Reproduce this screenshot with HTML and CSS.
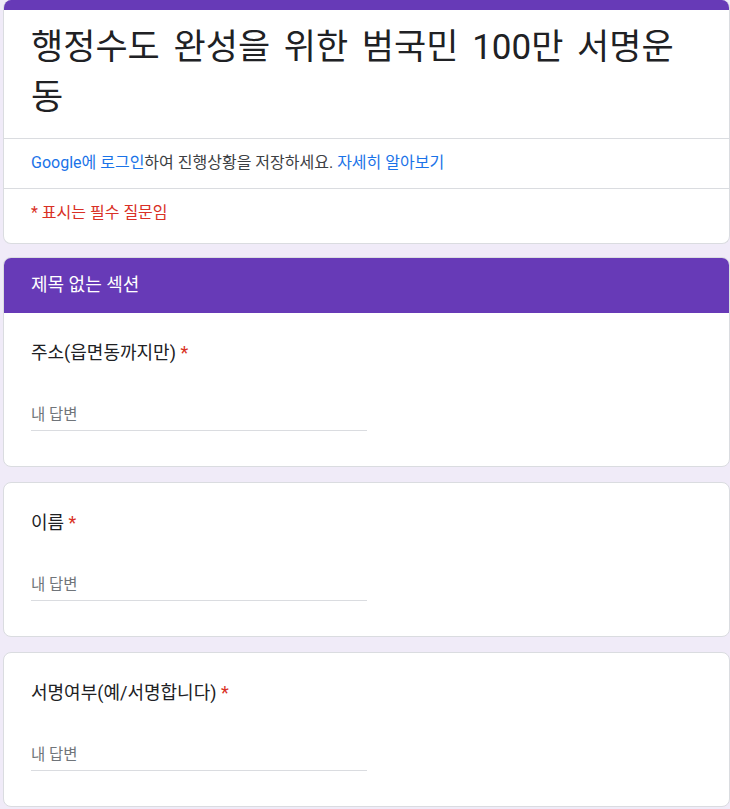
FILE: index.html
```html
<!DOCTYPE html>
<html lang="ko">
<head>
<meta charset="utf-8">
<title>행정수도 완성을 위한 범국민 100만 서명운동</title>
<link rel="stylesheet" href="styles.css">
</head>
<body>
<main class="page">
  <section class="card head-card">
    <div class="accent"></div>
    <h1 class="title">행정수도 완성을 위한 범국민 100만 서명운동</h1>
    <div class="row signin">
      <a class="link" href="#">Google에 로그인</a>하여 진행상황을 저장하세요. <a class="link" href="#">자세히 알아보기</a>
    </div>
    <div class="row required-note">* 표시는 필수 질문임</div>
  </section>

  <section class="card section-card">
    <div class="section-header">제목 없는 섹션</div>
    <div class="question">
      <div class="q-label">주소(읍면동까지만) <span class="star">*</span></div>
      <div class="answer">내 답변</div>
    </div>
  </section>

  <section class="card">
    <div class="question">
      <div class="q-label">이름 <span class="star">*</span></div>
      <div class="answer">내 답변</div>
    </div>
  </section>

  <section class="card">
    <div class="question">
      <div class="q-label">서명여부(예/서명합니다) <span class="star">*</span></div>
      <div class="answer">내 답변</div>
    </div>
  </section>
</main>
</body>
</html>
```

FILE: styles.css
```css
* { box-sizing: border-box; }

html, body {
  margin: 0;
  padding: 0;
  background: #f0ebf8;
}

body {
  font-family: Roboto, "Noto Sans CJK KR", sans-serif;
  color: #202124;
}

.page {
  display: flex;
  flex-direction: column;
  padding: 0 0 20px 3px;
  width: 730px;
}

.card {
  background: #ffffff;
  border: 1px solid #dadce0;
  border-radius: 8px;
  overflow: hidden;
  width: 727px;
  margin-top: 15px;
}

.head-card {
  border-top: none;
  margin-top: 0;
}

.section-card {
  margin-top: 13px;
}

.accent {
  height: 10px;
  background: #673ab7;
}

.title {
  margin: 0;
  padding: 13px 28px 15px 27px;
  font-size: 35px;
  font-weight: 400;
  line-height: 50px;
  word-spacing: 5px;
  color: #202124;
}

.row {
  border-top: 1px solid #dadce0;
  padding: 12px 27px 13px;
  font-size: 16px;
  line-height: 24px;
}

.signin {
  color: #3c4043;
}

.link {
  color: #1a73e8;
  text-decoration: none;
}

.required-note {
  color: #d93025;
  padding-bottom: 18px;
}

.section-header {
  background: #673ab7;
  color: #ffffff;
  font-size: 18px;
  line-height: 24px;
  padding: 15px 27px 16px;
}

.question {
  padding: 28px 27px 35px;
}

.q-label {
  font-size: 18px;
  line-height: 24px;
  color: #202124;
  margin-bottom: 38px;
}

.star {
  color: #d93025;
}

.answer {
  width: 336px;
  font-size: 15.5px;
  line-height: 24px;
  color: #70757a;
  padding-bottom: 3px;
  border-bottom: 1px solid #dadce0;
}
```
